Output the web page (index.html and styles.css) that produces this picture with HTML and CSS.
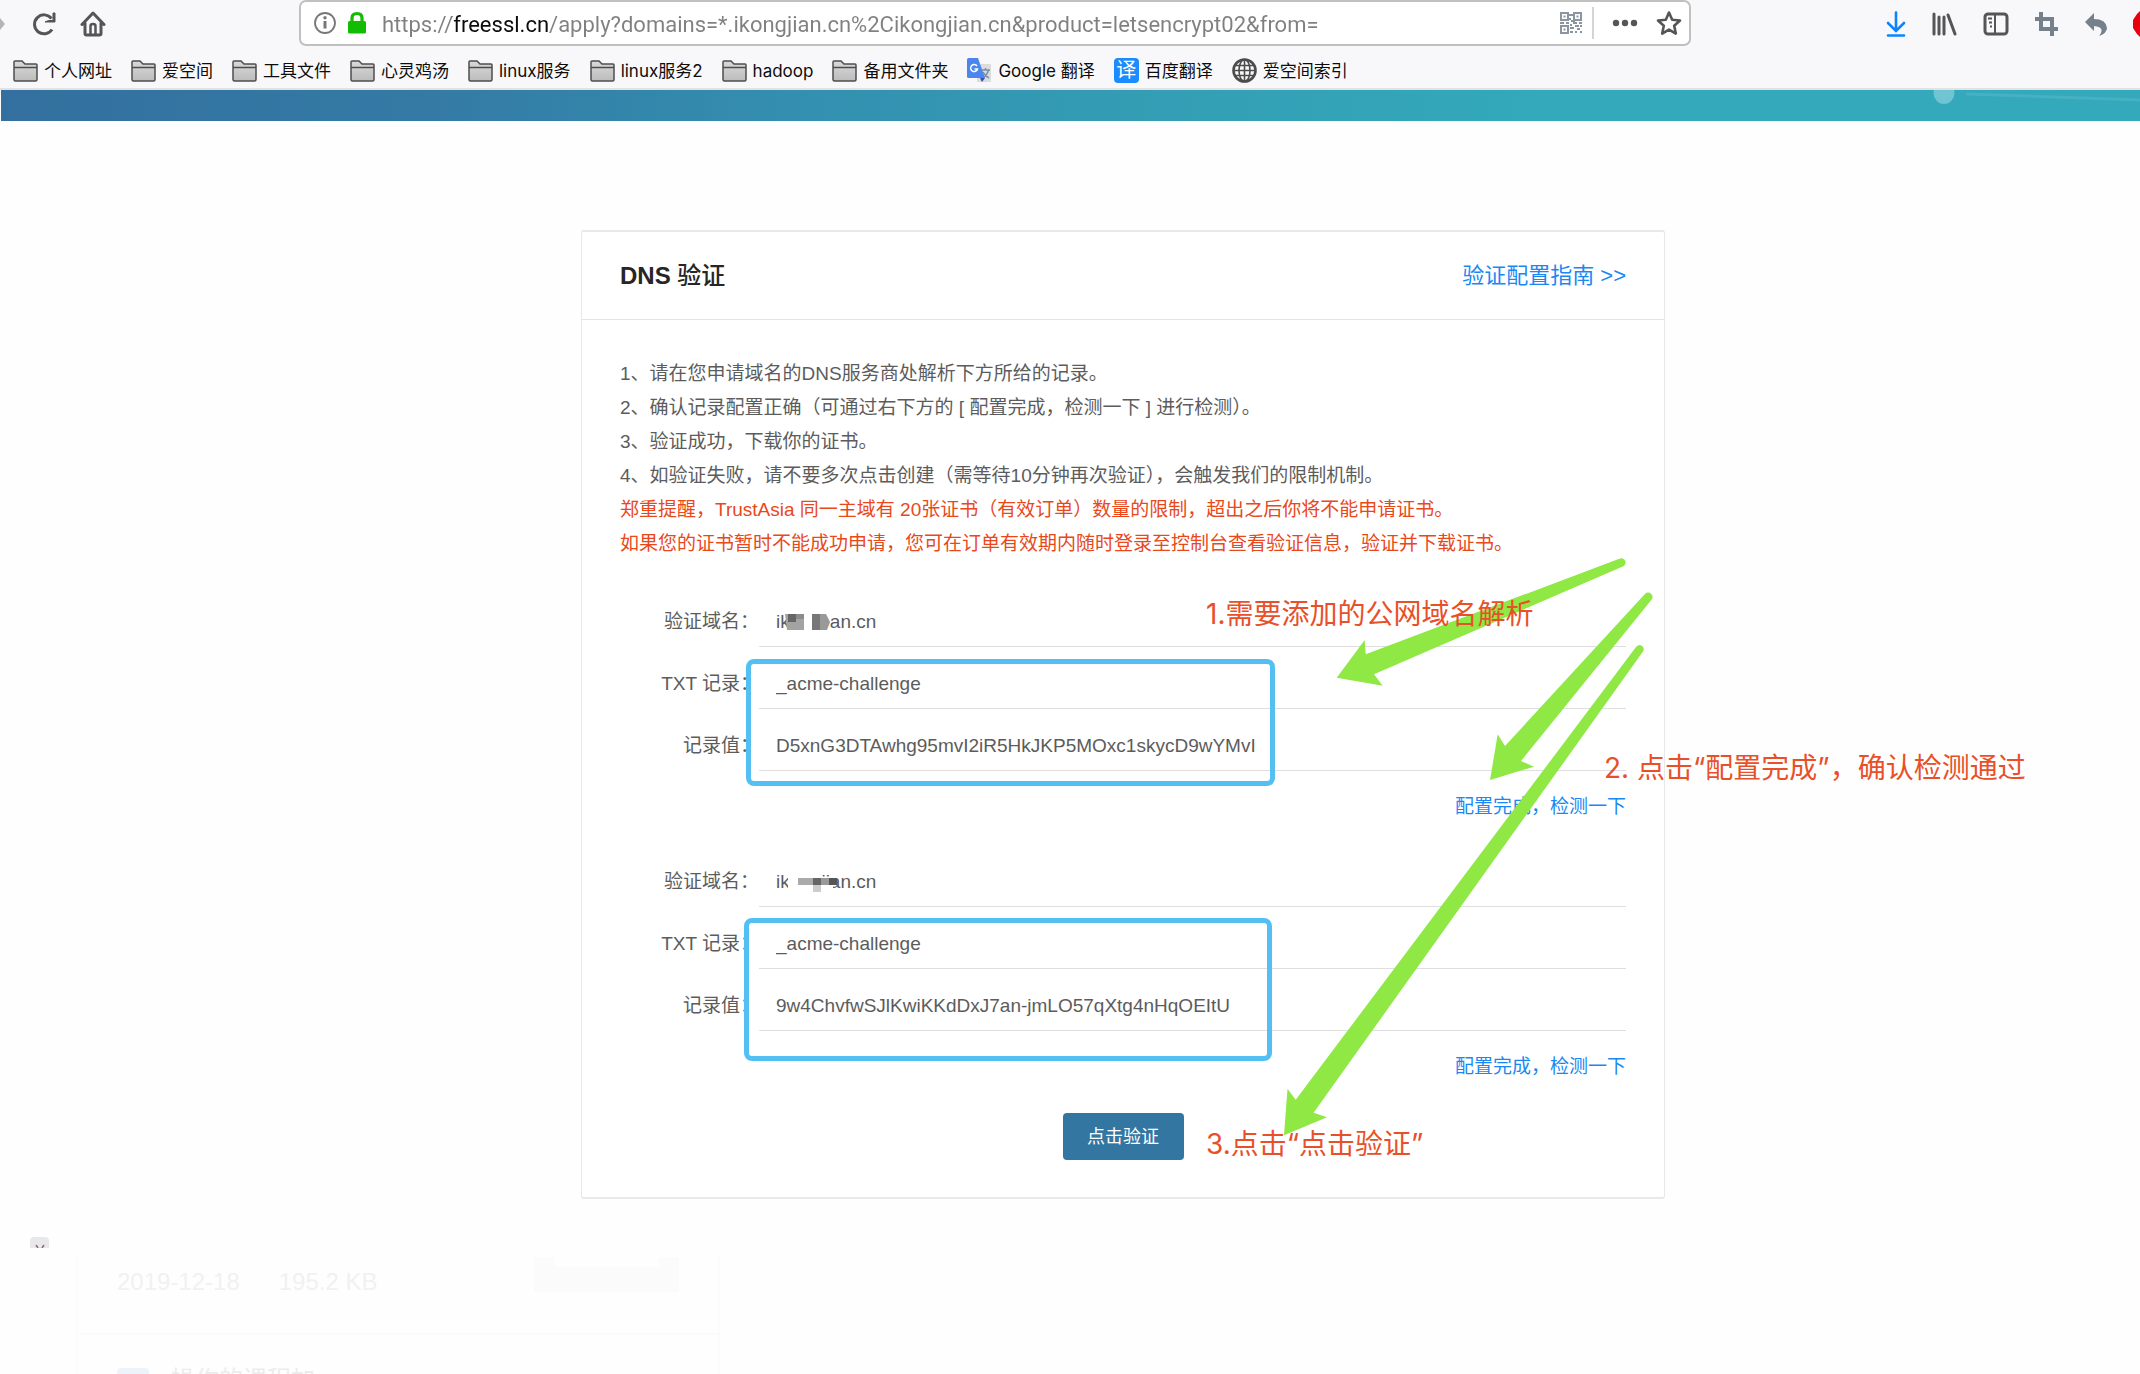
FILE: index.html
```html
<!DOCTYPE html>
<html lang="zh-CN">
<head>
<meta charset="utf-8">
<title>DNS 验证</title>
<link rel="stylesheet" href="styles.css">
</head>
<body>
<svg width="0" height="0" class="defs" aria-hidden="true">
  <defs>
    <linearGradient id="fg" x1="0" y1="0" x2="0" y2="1"><stop offset="0" stop-color="#d9d9d9"/><stop offset="1" stop-color="#bcbcbc"/></linearGradient>
    <symbol id="folder" viewBox="0 0 25 22"><path d="M1 19.500V2Q1 1 2 1H9L12 4H23Q24 4 24 5V19.500Q24 21 22.500 21H2.500Q1 21 1 19.500Z" fill="url(#fg)" stroke="#4d4d4d" stroke-width="1.500"/><path d="M1 7.500H24" stroke="#4d4d4d" stroke-width="1.500"/></symbol>
  </defs>
</svg>
<header class="browser">
  <div class="nav">
    <div class="nav-left">
      <svg class="fwd" width="6" height="18" viewBox="0 0 6 18"><path d="M0 3L5 9L0 15Z" fill="#b5b5b8"/></svg>
      <button class="tool" aria-label="刷新"><svg width="26" height="24" viewBox="0 0 26 24"><path d="M21 17.500A9.500 9.500 0 1 1 20.500 6.500" fill="none" stroke="#555" stroke-width="3"/><path d="M24 1V10H14L17.500 8.500H22V1Z" fill="#555" stroke="#555"/></svg></button>
      <button class="tool" aria-label="主页"><svg width="26" height="26" viewBox="0 0 26 26"><path d="M2 13.500L13 2L24 13.500M5 12V22.500Q5 24 6.500 24H19.500Q21 24 21 22.500V12" fill="none" stroke="#555" stroke-width="3" stroke-linejoin="round" stroke-linecap="round"/><path d="M10.500 24V15Q10.500 13 13 13T15.500 15V24" fill="none" stroke="#555" stroke-width="2.500"/></svg></button>
    </div>
    <div class="urlbar">
      <svg width="24" height="24" viewBox="0 0 24 24"><circle cx="12" cy="12" r="10" fill="none" stroke="#777" stroke-width="1.800"/><path d="M12 10V17.500" stroke="#777" stroke-width="3"/><circle cx="12" cy="6.800" r="1.700" fill="#777"/></svg>
      <svg width="20" height="24" viewBox="0 0 20 24"><path d="M5 11V7Q5 2.500 10 2.500T15 7V11" fill="none" stroke="#12bc00" stroke-width="3.200"/><rect x="1" y="10" width="18" height="12.500" rx="1.500" fill="#12bc00"/></svg>
      <input class="url" type="text" aria-label="网址" value="https://freessl.cn/apply?domains=*.ikongjian.cn%2Cikongjian.cn&amp;product=letsencrypt02&amp;from=">
      <svg width="22" height="22" viewBox="0 0 22 22" fill="none" stroke="#8b95a0" stroke-width="2"><rect x="1" y="1" width="7" height="7"/><rect x="14" y="1" width="7" height="7"/><rect x="1" y="14" width="7" height="7"/><path d="M3.500 4.500H5.500M16.500 4.500H18.500M3.500 17.500H5.500M9 3H13M9 7H11M11 9H15M0 11H4M6 11H9M13 11H17M19 11H22M10 13H12M15 14H19M10 16H14M17 17H20M10 20H13M15 20H17M20 20H22M20 14H22"/></svg>
      <i class="divider"></i>
      <svg width="26" height="8" viewBox="0 0 26 8" fill="#555"><circle cx="4" cy="4" r="3.200"/><circle cx="13" cy="4" r="3.200"/><circle cx="22" cy="4" r="3.200"/></svg>
      <svg width="26" height="26" viewBox="0 0 26 26"><path d="M13 2.500L16.200 9.700L24 10.500L18.200 15.800L19.800 23.600L13 19.600L6.200 23.600L7.800 15.800L2 10.500L9.800 9.700Z" fill="none" stroke="#555" stroke-width="2.600" stroke-linejoin="round"/></svg>
    </div>
    <div class="nav-right">
      <button class="tool" aria-label="下载"><svg width="20" height="26" viewBox="0 0 20 26" fill="none" stroke="#0a84ff" stroke-width="2.600" stroke-linecap="round"><path d="M10 1.500V19M2 12L10 20L18 12M2 24.500H18"/></svg></button>
      <button class="tool" aria-label="书库"><svg width="25" height="24" viewBox="0 0 25 24" fill="none" stroke="#555" stroke-width="3" stroke-linecap="round"><path d="M2 2V22M7 5V22M12 5V22M16 3L23 22"/></svg></button>
      <button class="tool" aria-label="侧栏"><svg width="26" height="24" viewBox="0 0 26 24" fill="none" stroke="#555" stroke-width="3"><rect x="2" y="2" width="22" height="20" rx="3"/><path d="M12 2V22" stroke-width="2"/><path d="M5 6.500H9M6 10.500H9M7 14.500H9" stroke-width="2"/></svg></button>
      <button class="tool" aria-label="截图"><svg width="23" height="24" viewBox="0 0 23 24" fill="none" stroke="#74808c" stroke-width="4"><path d="M6 0V17H23M0 7H17V24"/></svg></button>
      <button class="tool" aria-label="撤销"><svg width="24" height="24" viewBox="0 0 24 24"><path d="M10 1V7Q22 7 23 16Q23 21 15 24Q22 15 10 14V19L1 10Z" fill="#74808c"/></svg></button>
      <svg class="stop" width="7" height="26" viewBox="0 0 7 26"><path d="M7 0L4 3L0 9V17L4 23L7 26Z" fill="#e60012"/></svg>
    </div>
  </div>
  <nav class="bookmarks">
    <a href="#"><svg width="25" height="22"><use href="#folder"/></svg>个人网址</a>
    <a href="#"><svg width="25" height="22"><use href="#folder"/></svg>爱空间</a>
    <a href="#"><svg width="25" height="22"><use href="#folder"/></svg>工具文件</a>
    <a href="#"><svg width="25" height="22"><use href="#folder"/></svg>心灵鸡汤</a>
    <a href="#"><svg width="25" height="22"><use href="#folder"/></svg>linux服务</a>
    <a href="#"><svg width="25" height="22"><use href="#folder"/></svg>linux服务2</a>
    <a href="#"><svg width="25" height="22"><use href="#folder"/></svg>hadoop</a>
    <a href="#"><svg width="25" height="22"><use href="#folder"/></svg>备用文件夹</a>
    <a href="#"><svg width="25" height="25" viewBox="0 0 25 25"><rect x="10" y="6" width="14" height="18" rx="1" fill="#dcdcdc"/><path d="M14 12H23M18.500 10V12M21.500 12Q20 18 15 20M16 14Q18 18 22 20" stroke="#7a8fa8" stroke-width="1.500" fill="none"/><path d="M13 20H18L15 24Z" fill="#3450b0"/><path d="M1.500 0H11L18 20H1.500Q0 20 0 18.500V1.500Q0 0 1.500 0Z" fill="#4a86ee"/><path d="M10 8A3.500 3.500 0 1 0 10.500 11H7.500" fill="none" stroke="#fff" stroke-width="1.500"/></svg>Google 翻译</a>
    <a href="#"><span class="yi">译</span>百度翻译</a>
    <a href="#"><svg width="25" height="25" viewBox="0 0 25 25" fill="none" stroke="#4c4c4c"><circle cx="12.500" cy="12.500" r="11" stroke-width="2.600"/><ellipse cx="12.500" cy="12.500" rx="5.500" ry="11" stroke-width="1.600"/><path d="M12.500 1V24M1.500 12.500H23.500M3 7.500H22M3 17.500H22" stroke-width="1.600"/></svg>爱空间索引</a>
  </nav>
</header>
<div class="banner"><svg width="208" height="31" viewBox="0 0 208 31"><ellipse cx="12" cy="3" rx="10.500" ry="11" fill="#70c5d2"/><path d="M34 4L208 10" stroke="#45b1c2" stroke-width="3"/></svg></div>
<main class="page">
  <section class="card">
    <div class="card-head">
      <h1>DNS <span>验证</span></h1>
      <a href="#">验证配置指南 &gt;&gt;</a>
    </div>
    <div class="card-body">
      <div class="notes">
        <p>1、请在您申请域名的DNS服务商处解析下方所给的记录。</p>
        <p>2、确认记录配置正确（可通过右下方的 [ 配置完成，检测一下 ] 进行检测）。</p>
        <p>3、验证成功，下载你的证书。</p>
        <p>4、如验证失败，请不要多次点击创建（需等待10分钟再次验证），会触发我们的限制机制。</p>
        <p class="warn">郑重提醒，TrustAsia 同一主域有 20张证书（有效订单）数量的限制，超出之后你将不能申请证书。</p>
        <p class="warn">如果您的证书暂时不能成功申请，您可在订单有效期内随时登录至控制台查看验证信息，验证并下载证书。</p>
      </div>
      <div class="group">
        <div class="row"><label for="d1">验证域名：</label><input id="d1" readonly value="ikongjian.cn">
          <svg class="mosaic" width="52" height="20" viewBox="0 0 52 20"><path d="M9 0H46V20H9Z" fill="#fff"/><path d="M2 2H21V18H4Z" fill="#a3a3a3"/><path d="M5 2H13V10H5Z" fill="#666"/><path d="M13 2H21V7H13Z" fill="#8c8c8c"/><path d="M29 2H43L47 10L44 18H29Z" fill="#999"/><path d="M29 2H37V18H29Z" fill="#777"/></svg></div>
        <div class="row"><label for="t1">TXT 记录：</label><input id="t1" readonly value="_acme-challenge"></div>
        <div class="row"><label for="v1">记录值：</label><input id="v1" readonly value="D5xnG3DTAwhg95mvI2iR5HkJKP5MOxc1skycD9wYMvI"></div>
        <a class="check" href="#">配置完成，检测一下</a>
        <i class="frame frame-a"></i>
      </div>
      <div class="group group-next">
        <div class="row"><label for="d2">验证域名：</label><input id="d2" readonly value="ikongjian.cn">
          <svg class="mosaic" width="58" height="20" viewBox="0 0 58 20"><path d="M5 0H15V20H5Z" fill="#fff"/><path d="M15 12H50V20H15Z" fill="#fff"/><path d="M15 6H30V13H15Z" fill="#aaa"/><path d="M30 6H38V13H30Z" fill="#666"/><path d="M38 6H46V13H38Z" fill="#999"/><path d="M46 6H54V13H46Z" fill="#555"/><path d="M30 13H38V20H30Z" fill="#ccc"/></svg></div>
        <div class="row"><label for="t2">TXT 记录：</label><input id="t2" readonly value="_acme-challenge"></div>
        <div class="row"><label for="v2">记录值：</label><input id="v2" readonly value="9w4ChvfwSJlKwiKKdDxJ7an-jmLO57qXtg4nHqOEItU"></div>
        <a class="check" href="#">配置完成，检测一下</a>
        <i class="frame frame-b"></i>
      </div>
      <button class="submit">点击验证</button>
    </div>
    <svg class="arrows" width="1084" height="968" viewBox="582 231 1084 968" fill="#8fe843">
      <path d="M1336.700 676.700L1364.700 639L1365.700 653.300L1619.300 557.700A4 4 0 0 1 1623.300 565.300L1374 673.300L1382.700 684.700Z"/>
      <path d="M1490 779L1497.700 733.300L1505 745L1644.700 593.300A4 4 0 0 1 1651.700 598.500L1521 760L1534 765.700Z"/>
      <path d="M1284 1134.300L1287.500 1087.700L1295.700 1098.700L1636 646A4 4 0 0 1 1643 650.500L1313.600 1111.700L1327 1116.300Z"/>
    </svg>
    <p class="tip tip-1">1.需要添加的公网域名解析</p>
    <p class="tip tip-2">2. 点击“配置完成”，确认检测通过</p>
    <p class="tip tip-3">3.点击“点击验证”</p>
  </section>
</main>
<footer class="under">
  <span class="chip"><svg width="20" height="11" viewBox="0 0 20 11"><path d="M0 11V4Q0 0 4 0H15Q19 0 19 4V11Z" fill="#e8e8ea"/><path d="M6 8L8 11M14 8L12 11" stroke="#8a6a6a" stroke-width="1.500"/></svg></span>
  <div class="panel">
    <div class="file">
      <span>2019-12-18</span><span>195.2 KB</span>
      <i class="thumb"></i>
    </div>
    <div class="file-next"><i class="blue"></i><span>操作的课程加</span></div>
  </div>
</footer>
</body>
</html>
```
FILE: styles.css
```css
* { box-sizing: border-box; }
body {
  margin: 0;
  height: 100vh;
  overflow: hidden;
  background: #fefefe;
  color: #5c5c5c;
  font: 400 19px/34px "Liberation Sans", "Noto Sans CJK SC", sans-serif;
}
a { color: #1a88f2; text-decoration: none; }
p, h1 { margin: 0; }
svg { flex: none; display: block; }
.defs { position: absolute; }

.browser { height: 90px; background: #f8f8fa; border-bottom: 2px solid #e2e2e2; }
.nav { display: flex; height: 47px; }
.nav-left { display: flex; align-items: center; width: 299px; }
.fwd { margin-right: 25px; }
.tool { display: flex; padding: 0; border: 0; background: none; }
.tool + .tool { margin-left: 23px; }
.urlbar {
  flex: 1;
  display: flex;
  align-items: center;
  gap: 10px;
  height: 46px;
  padding: 0 7px 0 12px;
  border: 2px solid #c0c0c0;
  border-radius: 7px;
  background: #fff;
}
.url {
  flex: 1;
  min-width: 0;
  height: 40px;
  margin-left: 5px;
  padding: 2px 0 0;
  border: 0;
  outline: 0;
  background: linear-gradient(90deg, #808080 70px, #0c0c0d 70px, #0c0c0d 166px, #808080 166px);
  -webkit-background-clip: text;
  background-clip: text;
  color: transparent;
  font: 22px "Roboto", sans-serif;
}
.divider { width: 2px; height: 32px; background: #d5d5d5; }
.divider + svg { margin-left: 8px; margin-right: 8px; }
.nav-right { display: flex; align-items: center; justify-content: flex-end; width: 449px; }
.nav-right .tool + .tool { margin-left: 26px; }
.stop { margin-left: 25px; }
.bookmarks { display: flex; gap: 19px; padding: 11px 13px 0; }
.bookmarks a {
  display: flex;
  align-items: center;
  gap: 6px;
  height: 25px;
  color: #0c0c0d;
  font: 400 17px/24px "Inter", "Noto Sans CJK SC", sans-serif;
  white-space: nowrap;
}
.yi {
  width: 25px;
  height: 25px;
  border-radius: 4px;
  background: #1a8cff;
  color: #fff;
  font-size: 20px;
  text-align: center;
}

.banner {
  display: flex;
  justify-content: flex-end;
  height: 31px;
  margin-left: 1px;
  background: linear-gradient(90deg, #33709f 0%, #347aa5 20%, #3390b0 38%, #339eb5 54%, #33a9bb 72%, #33a9bb 100%);
}

.page { display: grid; grid-template-columns: 581fr 1084fr 475fr; padding-top: 109px; }
.card { grid-column: 2; position: relative; border: 2px solid #e8e8e8; border-width: 2px 1px; border-radius: 3px; background: #fff; }
.card-head {
  display: flex;
  align-items: center;
  justify-content: space-between;
  min-height: 88px;
  padding: 0 38px;
  border-bottom: 1px solid #e4e4e4;
}
.card-head a { font-size: 22px; }
h1 { color: #262626; font-size: 24px; font-weight: 700; }
h1 span { font-weight: 500; }
.card-body { padding: 37px 38px; }
.warn { color: #e9481a; }
.notes p { white-space: nowrap; }
.group { position: relative; display: flex; flex-direction: column; gap: 11px; padding-top: 35px; }
.group-next { padding-top: 32px; }
.row { display: grid; grid-template-columns: 139px 1fr; position: relative; line-height: 52px; height: 51px; }
.row label { text-align: right; white-space: nowrap; }
.row input {
  height: 51px;
  min-width: 0;
  padding: 2px 17px 0;
  border: 0;
  border-bottom: 1px solid #dedede;
  outline: 0;
  background: none;
  color: #5c5c5c;
  font: inherit;
  font-size: 19px;
}
.mosaic { position: absolute; left: 163px; top: 16px; }
.check { align-self: flex-end; margin-top: 8px; }
.frame { position: absolute; border: 5px solid #54bff3; border-radius: 8px; }
.frame-a { left: 126px; top: 98px; width: 529px; height: 127px; }
.frame-b { left: 124px; top: 94px; width: 528px; height: 143px; }
.submit {
  display: block;
  width: 121px;
  height: 47px;
  margin: 29px auto 0;
  border: 0;
  border-radius: 4px;
  background: #3276a1;
  color: #fff;
  font: inherit;
  font-size: 18px;
}
.arrows { position: absolute; left: 0; top: 0; }
.tip {
  position: absolute;
  color: #e8502a;
  font: 400 28px/40px "Inter", "Noto Sans CJK SC", sans-serif;
  white-space: nowrap;
}
.tip-1 { left: 624px; top: 362px; }
.tip-2 { left: 1022px; top: 516px; }
.tip-3 { left: 624px; top: 892px; }

.under { display: flex; padding: 38px 0 0 30px; }
.chip { width: 46px; }
.panel { width: 644px; margin-top: 20px; border: 2px solid #fbfbfb; border-top: 0; }
.file { display: flex; gap: 39px; height: 78px; padding: 8px 39px; border-bottom: 2px solid #fbfbfb; color: #f1f1f1; font-size: 24px; }
.thumb { width: 145px; height: 35px; margin: -8px 0 0 auto; background: linear-gradient(#fefefe, #fefefe) center top / 104px 10px no-repeat #fbfbfb; }
.file-next { display: flex; gap: 22px; padding: 33px 39px; color: #ececec; font-size: 24px; line-height: 24px; }
.blue { width: 32px; height: 32px; border-radius: 4px; background: #eef2fb; }
```
